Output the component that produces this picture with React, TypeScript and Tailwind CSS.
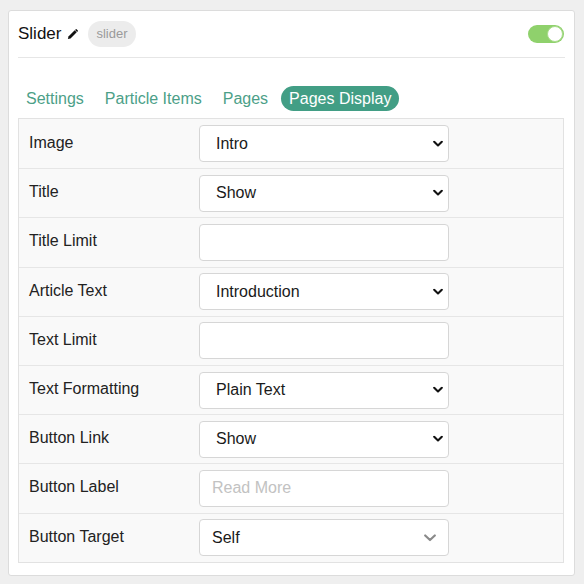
import React from "react";

type Row = { label: string; kind: "select" | "input" | "select2"; value?: string; placeholder?: string };

const rows: Row[] = [
  { label: "Image", kind: "select", value: "Intro" },
  { label: "Title", kind: "select", value: "Show" },
  { label: "Title Limit", kind: "input" },
  { label: "Article Text", kind: "select", value: "Introduction" },
  { label: "Text Limit", kind: "input" },
  { label: "Text Formatting", kind: "select", value: "Plain Text" },
  { label: "Button Link", kind: "select", value: "Show" },
  { label: "Button Label", kind: "input", placeholder: "Read More" },
  { label: "Button Target", kind: "select2", value: "Self" },
];

function Chevron() {
  return (
    <svg className="absolute right-[5px] top-1/2 -translate-y-1/2" width="10" height="7" viewBox="0 0 10 7">
      <path d="M1.2 1.3 L5 5 L8.8 1.3" fill="none" stroke="#111" strokeWidth="2.1" strokeLinecap="round" strokeLinejoin="round" />
    </svg>
  );
}

function Chevron2() {
  return (
    <svg className="absolute right-[12px] top-1/2 -translate-y-1/2" width="12" height="8" viewBox="0 0 12 8">
      <path d="M1.2 1.5 L6 6 L10.8 1.5" fill="none" stroke="#8a8a8a" strokeWidth="2.2" strokeLinecap="round" strokeLinejoin="round" />
    </svg>
  );
}

export default function App() {
  return (
    <div className="w-[584px] h-[584px] bg-[#efefef] pt-[10px] pl-[8px]" style={{ fontFamily: '"Liberation Sans", Arial, sans-serif' }}>
      <div className="w-[567px] h-[566px] bg-white border border-[#dcdcdc] rounded-[3px] px-[9px]">
        <div className="h-[47px] flex items-center border-b border-[#e6e6e6]">
          <span className="text-[17px] text-[#111] font-medium">Slider</span>
          <svg className="ml-[6px]" width="11" height="11" viewBox="0 0 12 12">
            <path d="M1 11 L1.6 8.2 L8.4 1.4 L10.6 3.6 L3.8 10.4 Z" fill="#111" />
            <path d="M8.8 1 L9.6 0.2 Q10 -0.1 10.4 0.2 L11.8 1.6 Q12.1 2 11.8 2.4 L11 3.2 Z" fill="#111" />
          </svg>
          <span className="ml-[10px] h-[26px] px-[8px] rounded-full bg-[#ececec] text-[#9a9a9a] text-[13px] flex items-center">slider</span>
          <div className="ml-auto mr-[1px] w-[36px] h-[18px] rounded-full bg-[#8fd16c] relative">
            <div className="absolute right-[1px] top-[1px] w-[16px] h-[16px] rounded-full bg-white border border-[#a9dc8c]" />
          </div>
        </div>
        <div className="mt-[28px] flex items-center gap-[5px] h-[25px] text-[16px] text-[#4c9f88]">
          <span className="px-[8px]">Settings</span>
          <span className="px-[8px]">Particle Items</span>
          <span className="px-[8px]">Pages</span>
          <span className="px-[8px] h-[25px] flex items-center rounded-full bg-[#429e85] text-white">Pages Display</span>
        </div>
        <div className="mt-[7px] w-[546px] border border-[#e2e2e2] bg-[#f9f9f9]">
          {rows.map((r, i) => (
            <div key={r.label} className={"flex items-center h-[49.2px] " + (i > 0 ? "border-t border-[#e6e6e6]" : "")}>
              <div className="w-[180px] pl-[10px] text-[16px] text-[#222] -mt-[2px]">{r.label}</div>
              {r.kind === "input" ? (
                <input
                  className="w-[250px] h-[37px] bg-white border border-[#d6d6d6] rounded-[4px] px-[12px] text-[16px] placeholder:text-[#c2c2c2] outline-none"
                  placeholder={r.placeholder}
                  readOnly
                />
              ) : (
                <div className="relative w-[250px] h-[37px] bg-white border border-[#d6d6d6] rounded-[4px] flex items-center">
                  <span className={"text-[16px] text-[#1a1a1a] " + (r.kind === "select2" ? "pl-[12px]" : "pl-[16px]")}>{r.value}</span>
                  {r.kind === "select2" ? <Chevron2 /> : <Chevron />}
                </div>
              )}
            </div>
          ))}
        </div>
      </div>
    </div>
  );
}
